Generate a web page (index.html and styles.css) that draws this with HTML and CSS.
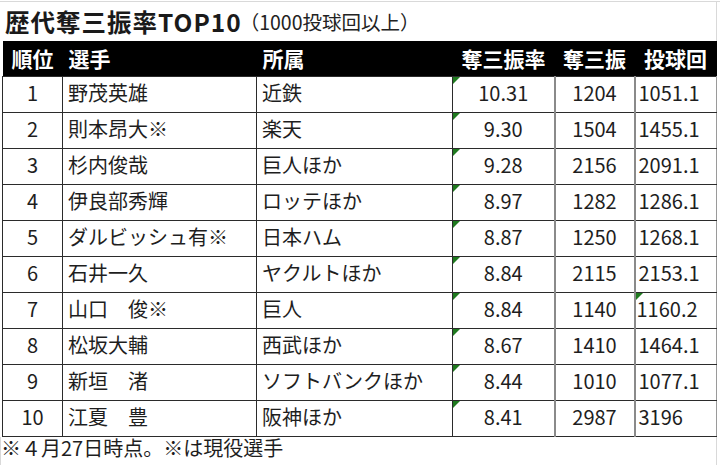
FILE: index.html
```html
<!DOCTYPE html>
<html lang="ja">
<head>
<meta charset="utf-8">
<link rel="stylesheet" href="styles.css">
</head>
<body>
<div class="sheet">
  <div class="title-row">
    <span class="title">歴代奪三振率TOP10</span><span class="sub">（1000投球回以上）</span>
  </div>
  <table class="rank">
    <colgroup>
      <col class="c1"><col class="c2"><col class="c3"><col class="c4"><col class="c5"><col class="c6">
    </colgroup>
    <thead>
      <tr>
        <th class="ctr">順位</th>
        <th class="lft">選手</th>
        <th class="lft">所属</th>
        <th class="ctr">奪三振率</th>
        <th class="ctr">奪三振</th>
        <th class="ctr">投球回</th>
      </tr>
    </thead>
    <tbody>
      <tr><td class="ctr">1</td><td class="lft">野茂英雄</td><td class="lft">近鉄</td><td class="ctr flag">10.31</td><td class="ctr gl">1204</td><td class="num gl">1051.1</td></tr>
      <tr><td class="ctr">2</td><td class="lft">則本昂大※</td><td class="lft">楽天</td><td class="ctr flag">9.30</td><td class="ctr gl">1504</td><td class="num gl">1455.1</td></tr>
      <tr><td class="ctr">3</td><td class="lft">杉内俊哉</td><td class="lft">巨人ほか</td><td class="ctr flag">9.28</td><td class="ctr gl">2156</td><td class="num gl">2091.1</td></tr>
      <tr><td class="ctr">4</td><td class="lft">伊良部秀輝</td><td class="lft">ロッテほか</td><td class="ctr flag">8.97</td><td class="ctr gl">1282</td><td class="num gl">1286.1</td></tr>
      <tr><td class="ctr">5</td><td class="lft">ダルビッシュ有※</td><td class="lft">日本ハム</td><td class="ctr flag">8.87</td><td class="ctr gl">1250</td><td class="num gl">1268.1</td></tr>
      <tr><td class="ctr">6</td><td class="lft">石井一久</td><td class="lft">ヤクルトほか</td><td class="ctr flag">8.84</td><td class="ctr gl">2115</td><td class="num gl">2153.1</td></tr>
      <tr><td class="ctr">7</td><td class="lft">山口　俊※</td><td class="lft">巨人</td><td class="ctr flag">8.84</td><td class="ctr gl">1140</td><td class="num gl flag tight">1160.2</td></tr>
      <tr><td class="ctr">8</td><td class="lft">松坂大輔</td><td class="lft">西武ほか</td><td class="ctr flag">8.67</td><td class="ctr gl">1410</td><td class="num gl">1464.1</td></tr>
      <tr><td class="ctr">9</td><td class="lft">新垣　渚</td><td class="lft">ソフトバンクほか</td><td class="ctr flag">8.44</td><td class="ctr gl">1010</td><td class="num gl">1077.1</td></tr>
      <tr><td class="ctr">10</td><td class="lft">江夏　豊</td><td class="lft">阪神ほか</td><td class="ctr flag">8.41</td><td class="ctr gl">2987</td><td class="num gl">3196</td></tr>
    </tbody>
  </table>
  <div class="note">※４月27日時点。※は現役選手</div>
</div>
</body>
</html>
```
FILE: styles.css
```css
html, body {
  margin: 0;
  padding: 0;
  background: #ffffff;
}
body {
  width: 720px;
  height: 465px;
  overflow: hidden;
  font-family: "Noto Sans CJK JP", "Noto Sans", sans-serif;
  color: #1e1e1e;
}
.sheet {
  border-top: 1px solid #d9d9d9;
  margin-top: 1px;
}
.title-row {
  height: 39px;
  box-sizing: border-box;
  display: flex;
  align-items: center;
  padding-left: 5px;
  border-right: 1px solid #d9d9d9;
  width: 717px;
}
.title {
  font-weight: 700;
  font-size: 24.5px;
  letter-spacing: 1px;
  color: #1a1a1a;
}
.sub {
  font-size: 19.5px;
  color: #222;
  margin-left: -2px;
}
.rank {
  border-collapse: collapse;
  table-layout: fixed;
  width: 714px;
  margin-left: 2px;
}
.c1 { width: 60px; }
.c2 { width: 194px; }
.c3 { width: 196px; }
.c4 { width: 102px; }
.c5 { width: 80px; }
.c6 { width: 82px; }
.rank th {
  background: #000;
  color: #fff;
  font-weight: 700;
  font-size: 21px;
  height: 35px;
  padding: 0;
  line-height: 1;
  border: none;
  white-space: nowrap;
}
.rank td {
  height: 32px;
  padding: 0 0 3px 0;
  font-size: 20px;
  line-height: 1;
  border: 1px solid #2b2b2b;
  white-space: nowrap;
  position: relative;
}
.rank tr td:last-child {
  border-right: 1px solid #9a9a9a;
}
.rank td.gl {
  border-left: 2px solid #8a8a8a;
}
.ctr { text-align: center; }
.lft { text-align: left; padding-left: 5px !important; }
.num { text-align: left; padding-left: 3px !important; }
.num.tight { padding-left: 1px !important; }
.rank th.lft { padding-left: 6px !important; }
.flag::before {
  content: "";
  position: absolute;
  left: 0;
  top: 0;
  width: 0;
  height: 0;
  border-top: 7px solid #1f7a1f;
  border-right: 7px solid transparent;
}
.note {
  height: 29px;
  box-sizing: border-box;
  width: 717px;
  border-left: 1px solid #d9d9d9;
  border-right: 1px solid #d9d9d9;
  font-size: 20px;
  line-height: 1;
  padding-top: 1px;
  padding-left: 0;
  color: #1e1e1e;
}
```
